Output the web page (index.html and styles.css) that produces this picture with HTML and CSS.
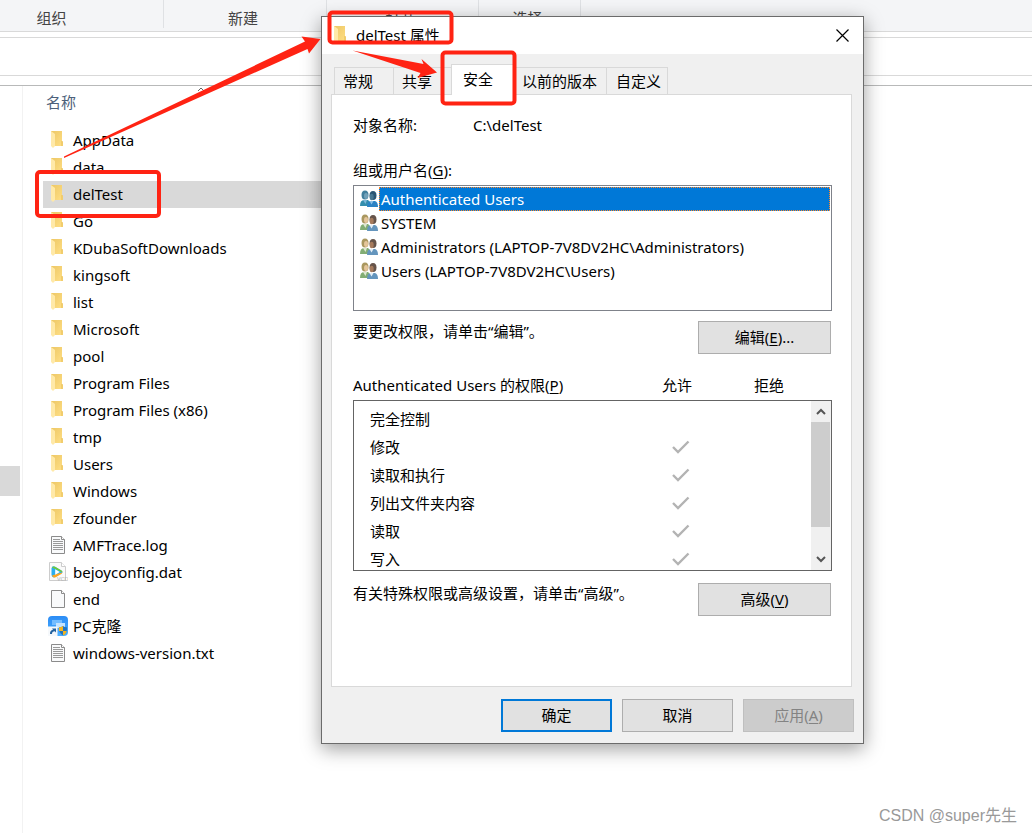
FILE: index.html
```html
<!DOCTYPE html>
<html lang="zh-CN">
<head>
    <meta charset="UTF-8">
    <meta name="viewport" content="width=device-width, initial-scale=1.0">
    <title>delTest 属性</title>
    <link rel="stylesheet" href="styles.css">
</head>
<body>
    <!-- shared icons -->
    <svg class="sprite" aria-hidden="true">
        <defs>
            <linearGradient id="folder-fill" x1="0" y1="0" x2="1" y2="1">
                <stop offset="0" stop-color="#edc765"/>
                <stop offset="1" stop-color="#ffdf85"/>
            </linearGradient>
            <linearGradient id="clone-fill" x1="0" y1="0" x2="0" y2="1">
                <stop offset="0" stop-color="#2b8cf5"/>
                <stop offset="1" stop-color="#4db0ff"/>
            </linearGradient>
            <symbol id="icon-folder" viewBox="0 0 20 20">
                <path d="M3 1h11v10l1 1v4H3z" fill="url(#folder-fill)"/>
                <path d="M3 1l4 3v12l-2 2-2-2z" fill="#ffe9a8"/>
                <path d="M14 11v5" stroke="#e6bd58" stroke-width="1"/>
            </symbol>
            <symbol id="icon-file" viewBox="0 0 20 20">
                <path d="M3.500 1.500h10l3 3v14h-13z" fill="#f9fafb" stroke="#8b8b8b"/>
                <path d="M13.500 1.500v3h3" fill="#fff" stroke="#8b8b8b"/>
            </symbol>
            <symbol id="icon-text" viewBox="0 0 20 20">
                <path d="M3.500 1.500h10l3 3v14h-13z" fill="#f9fafb" stroke="#8b8b8b"/>
                <path d="M13.500 1.500v3h3" fill="#fff" stroke="#8b8b8b"/>
                <path d="M5 4.500h7M5 6.500h10M5 8.500h10M5 10.500h10M5 12.500h10M5 14.500h10" stroke="#999"/>
            </symbol>
            <symbol id="icon-video" viewBox="0 0 20 20">
                <path d="M1.500 .5h12l4 4v14h-16z" fill="#fafafa" stroke="#ccc"/>
                <path d="M13.500 .5v4h4" fill="#fff" stroke="#ccc"/>
                <path d="M3.500 6.500q.3-3 3.200-2l6.800 3.900q1.900 1.400 0 2.900l-6.200 3.700q-3.200 1.400-3.800-2z" fill="#2aaef0"/>
                <path d="M4 5.500q1-1.600 3-.8l6.500 3.700q1.300 1 .9 2.200L8.500 7.500z" fill="#73ca32"/>
                <path d="M4 13.500l4.500-1.500 5.900-1.400q-.2.900-1.100 1.400l-5.700 3.300q-2.600 1-3.600-1.800z" fill="#ffa51f"/>
                <path d="M7.200 7.300l4.600 2.700-4.600 2.700z" fill="#fff"/>
                <text x="9" y="19" font-size="6" fill="#b5b5b5">VCD</text>
            </symbol>
            <symbol id="icon-clone" viewBox="0 0 20 20">
                <rect width="20" height="20" rx="4" fill="url(#clone-fill)"/>
                <path d="M4 4h10v5H4z" fill="#74bdff"/>
                <path d="M8 7h9v5H8z" fill="#c3e3ff"/>
                <path d="M0 10.500h9.500V20H0z" fill="#f5f8fb"/>
                <path d="M2 18q-.3-3.500 3-4.200L4 12.500h4v4l-1.200-1.200Q4 15.500 4 18z" fill="#24629e"/>
                <path d="M15 10q2 1.500 4 1.300Q19.500 17 15 19.500 10.500 17 11 11.300q2 .2 4-1.300z" fill="#2474bd"/>
                <path d="M15 10v5h-4q-.2-1.800 0-3.700 2 .2 4-1.300zM15 15h3.800q-.8 3-3.800 4.500z" fill="#f6b51e"/>
            </symbol>
            <symbol id="icon-users" viewBox="0 0 20 20">
                <path d="M1 17q0-6 4-6h4l2 2v4z" fill="#82ad74"/>
                <path d="M4 11h4l-1.500 4z" fill="#dfe8d3"/>
                <ellipse cx="6" cy="6" rx="3.500" ry="4.500" fill="#aa9860"/>
                <ellipse cx="7" cy="7" rx="2" ry="3" fill="#e4c59b"/>
                <path d="M8 18q0-6 4-6h4q3 1 3 6z" fill="#6495bd"/>
                <path d="M10.500 12h4l-2 3.500z" fill="#e4eef6"/>
                <ellipse cx="14" cy="6.500" rx="3.500" ry="4.500" fill="#66544a"/>
                <ellipse cx="12.700" cy="8" rx="2" ry="3.200" fill="#a67b5d"/>
            </symbol>
            <symbol id="icon-users-active" viewBox="0 0 20 20">
                <path d="M1 17q0-6 4-6h4l2 2v4z" fill="#348ead"/>
                <path d="M4 11h4l-1.500 4z" fill="#7db6d9"/>
                <ellipse cx="6" cy="6" rx="3.500" ry="4.500" fill="#427f9d"/>
                <ellipse cx="7" cy="7" rx="2" ry="3" fill="#72a1b9"/>
                <path d="M8 18q0-6 4-6h4q3 1 3 6z" fill="#2b82c4"/>
                <path d="M10.500 12h4l-2 3.500z" fill="#8cc0e6"/>
                <ellipse cx="14" cy="6.500" rx="3.500" ry="4.500" fill="#2a5573"/>
                <ellipse cx="12.700" cy="8" rx="2" ry="3.200" fill="#487791"/>
            </symbol>
            <symbol id="icon-check" viewBox="0 0 18 14">
                <path d="M1 7l5 5L16.500 1.500" fill="none" stroke="#b3b3b3" stroke-width="2.400"/>
            </symbol>
        </defs>
    </svg>

    <div class="explorer">
        <div class="ribbon">
            <div class="group group-organize">组织</div>
            <div class="group group-new">新建</div>
            <div class="group group-open">打开</div>
            <div class="group group-select">选择</div>
        </div>
        <div class="address"></div>
        <div class="content">
            <div class="nav"><div class="nav-selected"></div></div>
            <div class="files">
                <div class="column-head">
                    名称
                    <svg class="sort" viewBox="0 0 8 5"><path d="M1 4l3-3 3 3" fill="none" stroke="#666"/></svg>
                </div>
                <ul class="file-list">
                    <li><svg><use href="#icon-folder"/></svg>AppData</li>
                    <li><svg><use href="#icon-folder"/></svg>data</li>
                    <li class="selected"><svg><use href="#icon-folder"/></svg>delTest</li>
                    <li><svg><use href="#icon-folder"/></svg>Go</li>
                    <li><svg><use href="#icon-folder"/></svg>KDubaSoftDownloads</li>
                    <li><svg><use href="#icon-folder"/></svg>kingsoft</li>
                    <li><svg><use href="#icon-folder"/></svg>list</li>
                    <li><svg><use href="#icon-folder"/></svg>Microsoft</li>
                    <li><svg><use href="#icon-folder"/></svg>pool</li>
                    <li><svg><use href="#icon-folder"/></svg>Program Files</li>
                    <li><svg><use href="#icon-folder"/></svg>Program Files (x86)</li>
                    <li><svg><use href="#icon-folder"/></svg>tmp</li>
                    <li><svg><use href="#icon-folder"/></svg>Users</li>
                    <li><svg><use href="#icon-folder"/></svg>Windows</li>
                    <li><svg><use href="#icon-folder"/></svg>zfounder</li>
                    <li><svg><use href="#icon-text"/></svg>AMFTrace.log</li>
                    <li><svg><use href="#icon-video"/></svg>bejoyconfig.dat</li>
                    <li><svg><use href="#icon-file"/></svg>end</li>
                    <li><svg><use href="#icon-clone"/></svg>PC克隆</li>
                    <li><svg><use href="#icon-text"/></svg>windows-version.txt</li>
                </ul>
            </div>
        </div>
    </div>

    <div class="dialog" role="dialog" aria-labelledby="dialog-title">
        <div class="titlebar">
            <svg><use href="#icon-folder"/></svg>
            <span id="dialog-title">delTest 属性</span>
            <button class="close" type="button" aria-label="关闭">
                <svg viewBox="0 0 13 13"><path d="M.5 .5l12 12M12.500 .5l-12 12" stroke="#000" stroke-width="1.200"/></svg>
            </button>
        </div>

        <div class="tabs" role="tablist">
            <button type="button" role="tab">常规</button>
            <button type="button" role="tab">共享</button>
            <button type="button" role="tab" class="active" aria-selected="true">安全</button>
            <button type="button" role="tab">以前的版本</button>
            <button type="button" role="tab">自定义</button>
        </div>

        <div class="panel">
            <div class="object-name"><span>对象名称:</span><span>C:\delTest</span></div>

            <div class="label" id="group-label">组或用户名(<u>G</u>):</div>
            <ul class="user-list" role="listbox" aria-labelledby="group-label">
                <li role="option" aria-selected="true" class="selected"><svg><use href="#icon-users-active"/></svg><span>Authenticated Users</span></li>
                <li role="option"><svg><use href="#icon-users"/></svg><span>SYSTEM</span></li>
                <li role="option"><svg><use href="#icon-users"/></svg><span>Administrators (LAPTOP-7V8DV2HC\Administrators)</span></li>
                <li role="option"><svg><use href="#icon-users"/></svg><span>Users (LAPTOP-7V8DV2HC\Users)</span></li>
            </ul>

            <div class="action">
                <p>要更改权限，请单击“编辑”。</p>
                <button type="button">编辑(<u>E</u>)...</button>
            </div>

            <div class="perm-head">
                <span id="perm-label">Authenticated Users 的权限(<u>P</u>)</span>
                <span class="col">允许</span>
                <span class="col">拒绝</span>
            </div>
            <div class="perm-box">
                <table aria-labelledby="perm-label">
                    <tr><td>完全控制</td><td></td><td></td></tr>
                    <tr><td>修改</td><td><svg><use href="#icon-check"/></svg></td><td></td></tr>
                    <tr><td>读取和执行</td><td><svg><use href="#icon-check"/></svg></td><td></td></tr>
                    <tr><td>列出文件夹内容</td><td><svg><use href="#icon-check"/></svg></td><td></td></tr>
                    <tr><td>读取</td><td><svg><use href="#icon-check"/></svg></td><td></td></tr>
                    <tr><td>写入</td><td><svg><use href="#icon-check"/></svg></td><td></td></tr>
                </table>
                <div class="scrollbar">
                    <button type="button" aria-label="向上"><svg viewBox="0 0 10 7"><path d="M1 6l4-4 4 4" fill="none" stroke="#555" stroke-width="2"/></svg></button>
                    <div class="thumb"></div>
                    <button type="button" aria-label="向下"><svg viewBox="0 0 10 7"><path d="M1 1l4 4 4-4" fill="none" stroke="#555" stroke-width="2"/></svg></button>
                </div>
            </div>

            <div class="action">
                <p>有关特殊权限或高级设置，请单击“高级”。</p>
                <button type="button">高级(<u>V</u>)</button>
            </div>
        </div>

        <div class="buttons">
            <button type="button" class="default">确定</button>
            <button type="button">取消</button>
            <button type="button" disabled>应用(<u>A</u>)</button>
        </div>
    </div>

    <!-- red marks showing the click path -->
    <svg class="marks" width="520" height="220" aria-hidden="true">
        <g fill="none" stroke="#ff2313" stroke-width="4">
            <rect x="37" y="172" width="122" height="44" rx="3"/>
            <rect x="329.500" y="12.500" width="122" height="30" rx="3"/>
            <rect x="442.500" y="52.500" width="72" height="51" rx="3"/>
        </g>
        <g fill="#ff2313">
            <path d="M64 156.500L305 41.500 301.500 36.500 320.500 39 309 53.500 307.500 49 64 158z"/>
            <path d="M352.500 50.500L423.500 64 421.500 59 437 72.500 417.500 78 420.500 73z"/>
        </g>
    </svg>

    <div class="watermark">CSDN @super先生</div>
</body>
</html>
```
FILE: styles.css
```css
:root {
    --text-color: #000;
    --border-color: #d9d9d9;
    --face-color: #f0f0f0;
    --button-color: #e1e1e1;
    --accent-color: #0078d7;
}

* {
    box-sizing: border-box;
}

body {
    position: relative;
    min-height: 100vh;
    margin: 0;
    font-family: "Noto Sans", "Noto Sans CJK SC", sans-serif;
    font-size: 15px;
    line-height: 20px;
    color: var(--text-color);
    background-color: #fff;
}

button {
    padding: 0;
    border: none;
    background: none;
    font: inherit;
    color: inherit;
}

ul {
    margin: 0;
    padding: 0;
    list-style: none;
}

p {
    margin: 0;
}

u {
    text-underline-offset: 2px;
}

.sprite {
    position: absolute;
    width: 0;
    height: 0;
}

/* explorer window */
.ribbon {
    display: flex;
    height: 32px;
    padding-bottom: 3px;
    background-color: #f4f5f7;
    border-bottom: 1px solid var(--border-color);
}

.group {
    padding: 8px 4px 0 0;
    border-right: 1px solid #dfe1e4;
    text-align: center;
    color: #444;
}

.group-organize {
    width: 164px;
    padding-right: 60px;
}

.group-new {
    width: 163px;
}

.group-open {
    width: 152px;
}

.group-select {
    width: 102px;
}

.address {
    height: 39px;
    margin: 5px 0 9px;
    border-top: 1px solid var(--border-color);
    border-bottom: 1px solid var(--border-color);
}

.content {
    display: flex;
    min-height: calc(100vh - 85px);
    border-top: 1px solid #b8b9b9;
}

.nav {
    width: 23px;
    padding: 380px 2px 0 0;
    border-right: 1px solid #f2f2f2;
}

.nav-selected {
    height: 30px;
    background-color: #d9d9d9;
}

.files {
    width: 78%;
    padding-left: 20px;
}

.column-head {
    position: relative;
    height: 41px;
    padding: 6px 3px;
    color: #4c607a;
}

.sort {
    position: absolute;
    top: 1px;
    left: 154px;
    width: 8px;
    height: 5px;
}

.file-list li {
    display: flex;
    align-items: center;
    gap: 5px;
    height: 27px;
    padding: 0 0 2px 5px;
}

.file-list li.selected {
    background-color: #d9d9d9;
}

.file-list svg,
.titlebar > svg {
    width: 20px;
    height: 20px;
}

/* properties dialog */
.dialog {
    position: absolute;
    top: 16px;
    left: 321px;
    width: 543px;
    background-color: var(--face-color);
    border: 1px solid #6b6b6b;
    box-shadow: 0 5px 18px rgba(0, 0, 0, 0.38);
}

.titlebar {
    display: flex;
    align-items: center;
    gap: 5px;
    height: 37px;
    padding: 0 14px 1px 9px;
    background-color: #fff;
}

.close {
    display: flex;
    margin-left: auto;
}

.close svg {
    width: 13px;
    height: 13px;
}

.tabs {
    display: flex;
    align-items: flex-end;
    height: 40px;
    padding: 0 12px;
}

.tabs button {
    height: 27px;
    padding: 0 7px;
    border: 1px solid var(--border-color);
    border-width: 1px 0 0 1px;
    text-align: left;
}

.tabs button:first-child {
    width: 59px;
    padding-left: 8px;
}

.tabs button:nth-child(2) {
    width: 58px;
    padding-left: 8px;
}

.tabs button:nth-child(4) {
    width: 92px;
}

.tabs button:last-child {
    padding: 0 6px 0 9px;
    border-right-width: 1px;
}

.tabs button.active {
    z-index: 1;
    width: 63px;
    height: 31px;
    margin-bottom: -1px;
    padding: 0 11px 2px;
    background-color: #fff;
}

.panel {
    min-height: 593px;
    margin: 0 11px 12px 9px;
    padding: 20px 19px 0 21px;
    background-color: #fff;
    border: 1px solid var(--border-color);
}

.object-name {
    display: grid;
    grid-template-columns: 120px 1fr;
    margin-bottom: 25px;
}

.label {
    margin-bottom: 5px;
}

.user-list {
    height: 126px;
    padding: 1px 1px 0 5px;
    border: 1px solid #7f828a;
}

.user-list li {
    display: flex;
    align-items: center;
    height: 24px;
}

.user-list svg {
    width: 20px;
    height: 20px;
}

.user-list span {
    flex: 1;
    padding: 2px;
}

.user-list .selected span {
    color: #fff;
    background-color: var(--accent-color);
    outline: 1px dotted #ff8728;
    outline-offset: -1px;
}

.action {
    display: flex;
    justify-content: space-between;
    margin: 10px 1px 0 0;
}

.perm-box + .action {
    margin-top: 12px;
}

.action button,
.buttons button {
    height: 33px;
    padding-bottom: 2px;
    background-color: var(--button-color);
    border: 1px solid #adadad;
}

.action button {
    width: 133px;
}

.perm-head {
    display: flex;
    margin: 21px 17px 5px 0;
}

.perm-head span:first-child {
    flex: 1;
}

.col {
    width: 92px;
    text-align: center;
}

.perm-box {
    display: flex;
    height: 171px;
    overflow: hidden;
    border: 1px solid #646464;
}

.perm-box table {
    flex: 1;
    align-self: flex-start;
    margin-top: 4px;
    border-collapse: collapse;
}

.perm-box td {
    width: 87px;
    height: 28px;
    padding: 0;
    text-align: center;
}

.perm-box td:first-child {
    width: auto;
    padding-left: 16px;
    text-align: left;
}

.perm-box td svg {
    display: block;
    width: 18px;
    height: 14px;
    margin: 0 auto;
}

.scrollbar {
    display: flex;
    flex-direction: column;
    width: 20px;
    background-color: var(--face-color);
}

.scrollbar button {
    display: flex;
    align-items: center;
    justify-content: center;
    height: 21px;
}

.scrollbar svg {
    width: 10px;
    height: 7px;
}

.thumb {
    height: 105px;
    margin: 0 1px auto 0;
    background-color: #cdcdcd;
}

.buttons {
    display: flex;
    justify-content: flex-end;
    gap: 10px;
    padding: 0 9px 11px;
}

.buttons button {
    width: 111px;
}

.buttons button.default {
    border: 2px solid var(--accent-color);
}

.buttons button:disabled {
    color: #838383;
    background-color: #ccc;
    border-color: #bfbfbf;
}

.marks {
    position: absolute;
    z-index: 2;
    top: 0;
    left: 0;
    pointer-events: none;
}

.watermark {
    position: absolute;
    right: 15px;
    bottom: 7px;
    font-family: "Liberation Sans", "Noto Sans CJK SC", sans-serif;
    font-size: 16px;
    color: #999;
}
```
